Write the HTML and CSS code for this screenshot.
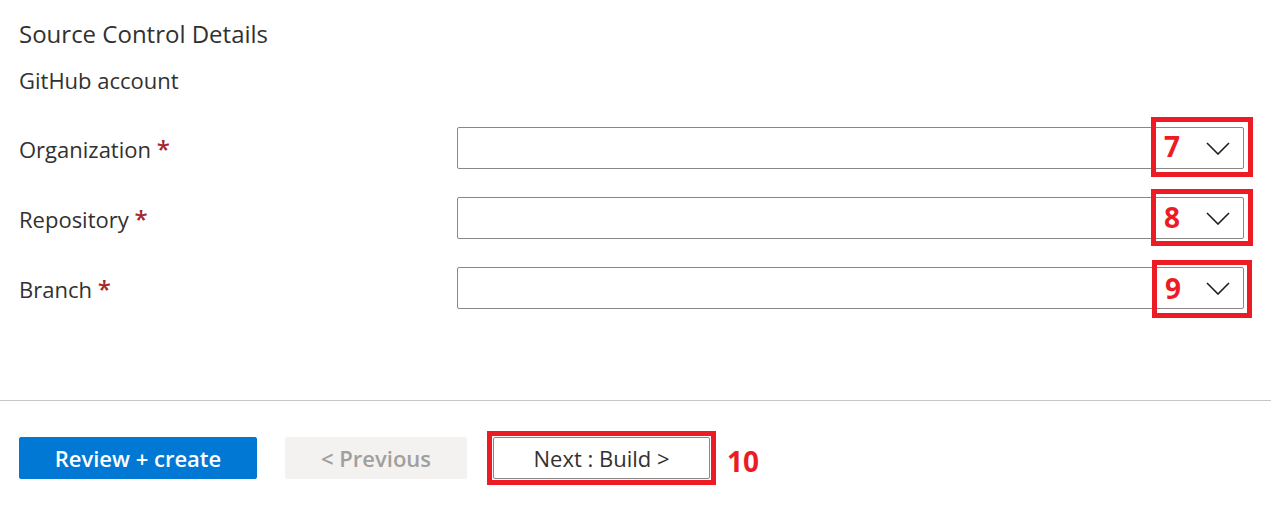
FILE: index.html
```html
<!DOCTYPE html>
<html>
<head>
    <link rel="stylesheet" href="styles.css">
</head>
<body>
<div class="blade">
    <div class="content">
        <h2 class="section-title">Source Control Details</h2>
        <div class="subtitle">GitHub account</div>

        <div class="form">
            <div class="form-row">
                <label class="field-label">Organization <span class="required">*</span></label>
                <div class="dropdown">
                    <span class="chevron">
                        <svg width="24" height="13" viewBox="0 0 24 13"><path d="M1 1 L12 12 L23 1" fill="none" stroke="#201f1e" stroke-width="1.6"/></svg>
                    </span>
                    <div class="marker">7</div>
                </div>
            </div>
            <div class="form-row">
                <label class="field-label">Repository <span class="required">*</span></label>
                <div class="dropdown">
                    <span class="chevron">
                        <svg width="24" height="13" viewBox="0 0 24 13"><path d="M1 1 L12 12 L23 1" fill="none" stroke="#201f1e" stroke-width="1.6"/></svg>
                    </span>
                    <div class="marker">8</div>
                </div>
            </div>
            <div class="form-row">
                <label class="field-label">Branch <span class="required">*</span></label>
                <div class="dropdown">
                    <span class="chevron">
                        <svg width="24" height="13" viewBox="0 0 24 13"><path d="M1 1 L12 12 L23 1" fill="none" stroke="#201f1e" stroke-width="1.6"/></svg>
                    </span>
                    <div class="marker">9</div>
                </div>
            </div>
        </div>
    </div>

    <div class="footer">
        <button class="btn btn-primary">Review + create</button>
        <button class="btn btn-disabled">&lt; Previous</button>
        <div class="callout">
            <button class="btn btn-default">Next : Build &gt;</button>
        </div>
        <span class="callout-number">10</span>
    </div>
</div>
</body>
</html>
```

FILE: styles.css
```css
body {
    margin: 0;
    padding: 0;
    background: #fff;
    color: #323130;
    font-family: "Open Sans", "Noto Sans", sans-serif;
}

.blade {
    width: 1271px;
}

.content {
    padding: 19px 0 0 19px;
    height: 400px;
    box-sizing: border-box;
}

.section-title {
    margin: 0;
    font-size: 24px;
    font-weight: 400;
    line-height: 30px;
}

.subtitle {
    margin-top: 17px;
    font-size: 22px;
    line-height: 28px;
}

.form {
    margin-top: 33px;
}

.form-row {
    display: grid;
    grid-template-columns: 438px 787px;
    align-items: center;
    height: 42px;
    margin-bottom: 28px;
}

.field-label {
    font-size: 22px;
}

.required {
    color: #a4262c;
    font-weight: 600;
    font-size: 24px;
}

.dropdown {
    position: relative;
    height: 42px;
    border: 1px solid #8a8886;
    border-radius: 2px;
    box-sizing: border-box;
    display: flex;
    align-items: center;
    justify-content: flex-end;
    padding-right: 13px;
}

.chevron {
    display: flex;
}

.marker {
    position: absolute;
    top: -11px;
    right: -10px;
    width: 102px;
    height: 60px;
    box-sizing: border-box;
    border: 5px solid #ed1c24;
    color: #ed1c24;
    font-family: "Open Sans", sans-serif;
    font-weight: 700;
    font-size: 28px;
    line-height: 48px;
    padding-left: 8px;
}

.form-row:nth-child(2) .marker {
    height: 57px;
    top: -9px;
    line-height: 46px;
}

.form-row:nth-child(3) .marker {
    height: 58px;
    top: -8px;
    right: -9px;
    width: 100px;
    line-height: 47px;
}

.footer {
    border-top: 1px solid #c8c6c4;
    display: flex;
    align-items: center;
    padding: 30px 0 0 19px;
}

.btn {
    height: 42px;
    border-radius: 2px;
    font-family: "Open Sans", sans-serif;
    font-size: 22px;
    font-weight: 600;
    padding: 0;
    box-sizing: border-box;
}

.btn-primary {
    width: 238px;
    background-color: #0078d4;
    border: 1px solid #0078d4;
    color: #fff;
}

.btn-disabled {
    width: 182px;
    margin-left: 28px;
    background-color: #f3f2f1;
    border: 1px solid #f3f2f1;
    color: #a19f9d;
}

.callout {
    margin-left: 20px;
    border: 5px solid #ed1c24;
    padding: 1px;
    display: flex;
}

.btn-default {
    width: 217px;
    background-color: #fff;
    border: 1px solid #8a8886;
    color: #323130;
    font-weight: 400;
}

.callout-number {
    margin-left: 11px;
    margin-top: 6px;
    color: #ed1c24;
    font-weight: 700;
    font-size: 28px;
}
```
